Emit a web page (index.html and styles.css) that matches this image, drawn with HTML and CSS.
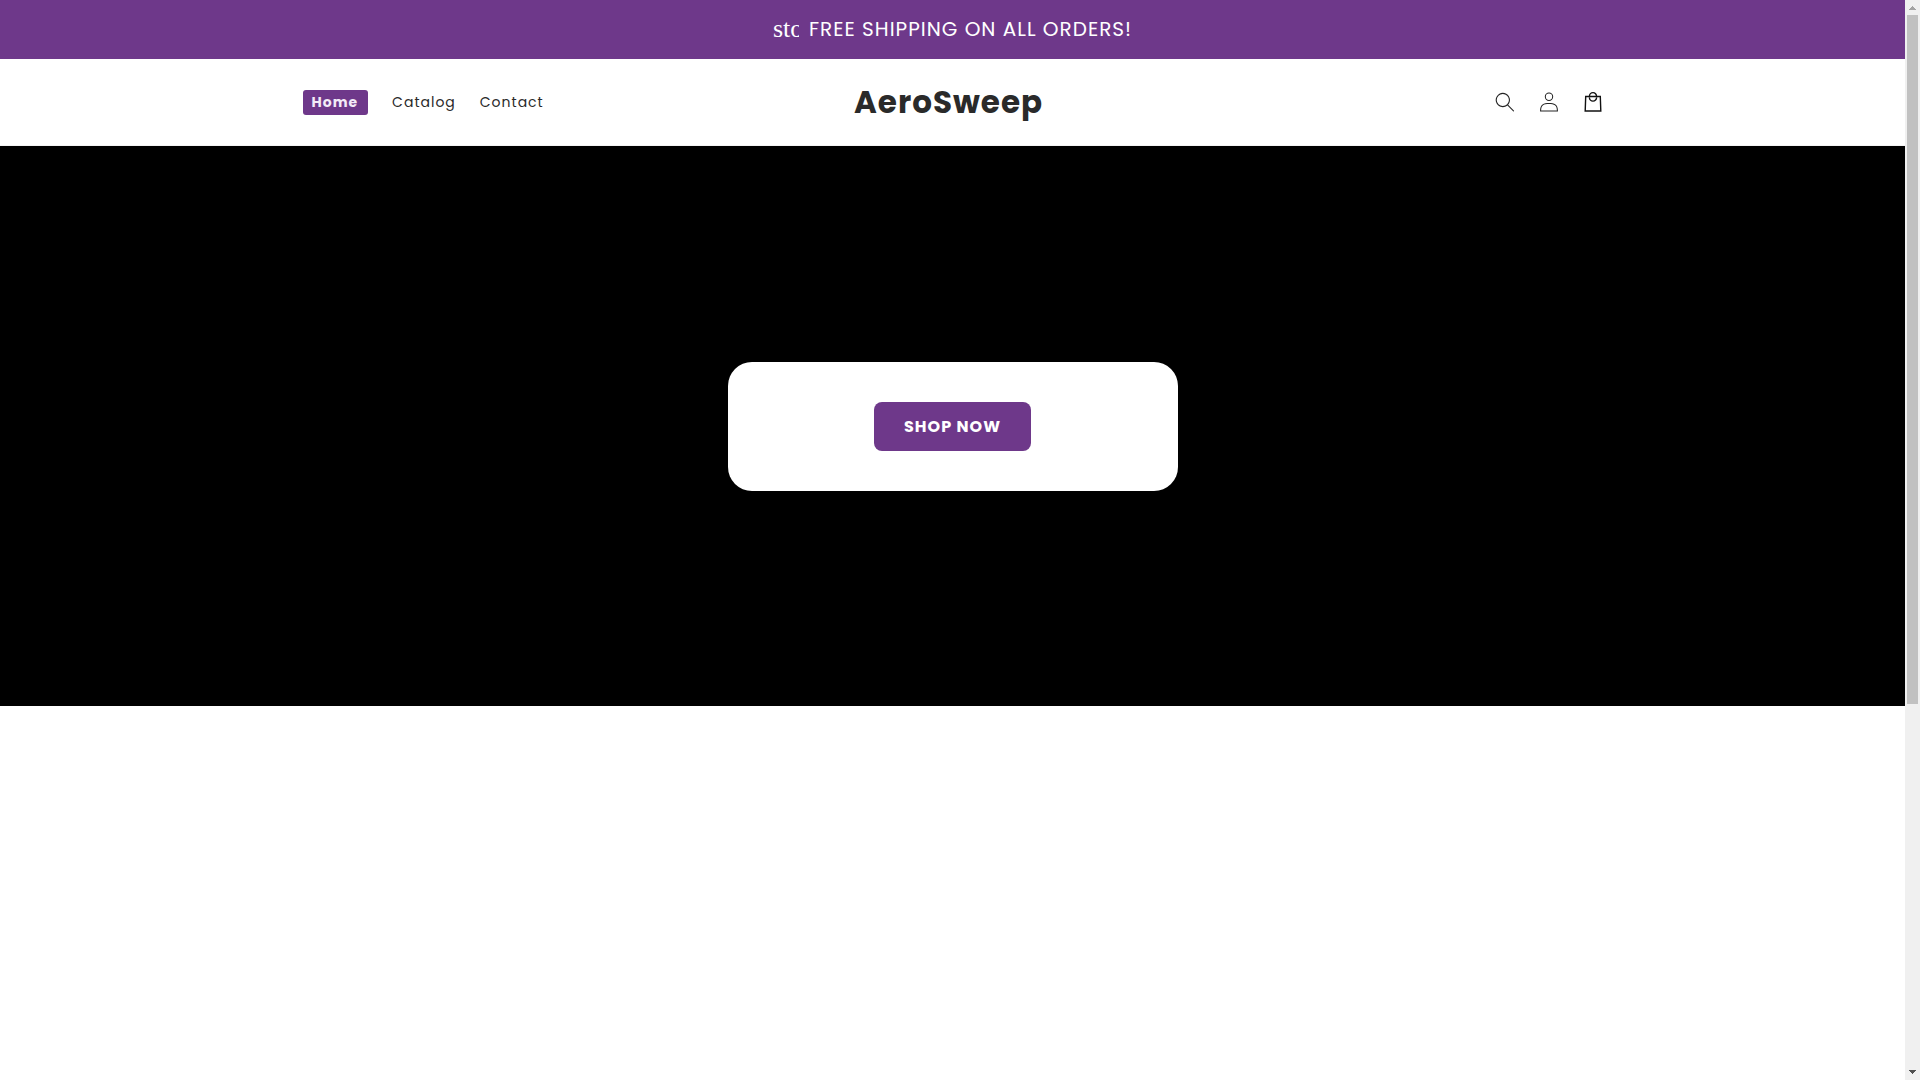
FILE: index.html
```html
<!DOCTYPE html>
<html lang="en">
<head>
<meta charset="utf-8">
<meta name="viewport" content="width=device-width, initial-scale=1">
<title>AeroSweep</title>
<link rel="stylesheet" href="styles.css">
</head>
<body>
<div class="page">
  <div class="announcement">
    <span class="announcement-icon" aria-hidden="true">sto</span>
    <p class="announcement-text">FREE SHIPPING ON ALL ORDERS!</p>
  </div>
  <header class="header">
    <div class="header-inner">
      <nav class="nav" aria-label="Main">
        <a class="nav-link nav-link-active" href="#home" aria-current="page">Home</a>
        <a class="nav-link" href="#catalog">Catalog</a>
        <a class="nav-link" href="#contact">Contact</a>
      </nav>
      <a class="logo" href="#home">AeroSweep</a>
      <div class="actions">
        <button class="icon-button" type="button" aria-label="Search">
          <svg class="icon" viewBox="0 0 18 19" aria-hidden="true"><path fill-rule="evenodd" clip-rule="evenodd" d="M11.03 11.68A5.784 5.784 0 112.85 3.5a5.784 5.784 0 018.18 8.18zm.26 1.12a6.78 6.78 0 11.72-.7l5.4 5.4a.5.5 0 11-.71.7l-5.41-5.4z"/></svg>
        </button>
        <a class="icon-button" href="#account" aria-label="Log in">
          <svg class="icon" viewBox="0 0 18 19" aria-hidden="true"><path fill-rule="evenodd" clip-rule="evenodd" d="M6 4.5a3 3 0 116 0 3 3 0 01-6 0zm3-4a4 4 0 100 8 4 4 0 000-8zm5.58 12.15c1.12.82 1.83 2.24 1.91 4.85H1.51c.08-2.6.79-4.03 1.9-4.85C4.66 11.75 6.5 11.5 9 11.5s4.35.26 5.58 1.15zM9 10.5c-2.5 0-4.65.24-6.17 1.35C1.27 12.98.5 14.93.5 18v.5h17V18c0-3.07-.77-5.02-2.33-6.15-1.52-1.1-3.67-1.35-6.17-1.35z"/></svg>
        </a>
        <a class="icon-button" href="#cart" aria-label="Cart">
          <svg class="bag" viewBox="0 0 20 22" aria-hidden="true"><path d="M2.700 5.500h14.600l.5 14.500H2.200zM6.400 5.500a3.600 3.900 0 0 1 7.200 0M6.400 6.500a3.600 3.600 0 0 0 7.200 0"/></svg>
        </a>
      </div>
    </div>
  </header>
  <main>
    <section class="hero">
      <div class="hero-card">
        <a class="shop-button" href="#shop">SHOP NOW</a>
      </div>
    </section>
  </main>
</div>
<div class="scrollbar" aria-hidden="true">
  <svg class="scroll-arrow" viewBox="0 0 15 15" shape-rendering="crispEdges"><path fill="#a3a3a3" d="M7 6h1v1h1v1h1v1h1v1H4V9h1V8h1V7h1z"/></svg>
  <div class="scroll-track"><div class="scroll-thumb"></div></div>
  <svg class="scroll-arrow" viewBox="0 0 15 15" shape-rendering="crispEdges"><path fill="#505050" d="M4 5h7v1h-1v1H9v1H8v1H7V8H6V7H5V6H4z"/></svg>
</div>
</body>
</html>
```
FILE: styles.css
```css
* {
  box-sizing: border-box;
}

body {
  margin: 0;
  display: flex;
  height: 100vh;
  overflow: hidden;
  background: #fff;
  color: #2a2a2a;
  font-family: Poppins, Inter, sans-serif;
}

a {
  color: inherit;
  text-decoration: none;
}

.page {
  flex: 1;
  min-width: 0;
}

.announcement {
  display: flex;
  align-items: center;
  justify-content: center;
  gap: 10px;
  height: 59px;
  padding-bottom: 2px;
  background: #6e388a;
  color: #fff;
}

.announcement-icon {
  width: 26px;
  overflow: hidden;
  font-family: "Liberation Serif", serif;
  font-size: 26px;
  line-height: 28px;
}

.announcement-text {
  margin: 0;
  font-size: 20px;
  line-height: 30px;
  letter-spacing: 1px;
}

.header {
  border-bottom: 1px solid #f4f4f4;
}

.header-inner {
  display: grid;
  grid-template-columns: 1fr auto 1fr;
  align-items: center;
  max-width: 1400px;
  height: 86px;
  margin: 0 auto;
  padding: 0 50px;
}

.nav {
  display: flex;
  align-items: center;
  gap: 24px;
}

.nav-link {
  font-size: 14px;
  line-height: 25px;
  letter-spacing: 1px;
}

.nav-link-active {
  padding: 0 10px 0 9px;
  border-radius: 3px;
  background: #6e388a;
  color: #f3ebf7;
  font-weight: 700;
}

.logo {
  padding-right: 8px;
  font-size: 31px;
  font-weight: 700;
  line-height: 40px;
  letter-spacing: 1px;
}

.actions {
  display: flex;
  justify-content: flex-end;
  margin-right: -12px;
}

.icon-button {
  display: flex;
  align-items: center;
  justify-content: center;
  width: 44px;
  height: 44px;
  padding: 0;
  border: 0;
  background: none;
  color: #242424;
  cursor: pointer;
}

.icon {
  width: 20px;
  height: 20px;
  fill: currentColor;
}

.bag {
  width: 20px;
  height: 22px;
  fill: none;
  stroke: #111;
  stroke-width: 1.4;
}

.hero {
  display: flex;
  align-items: center;
  justify-content: center;
  min-height: 560px;
  background: #000;
}

.hero-card {
  display: flex;
  justify-content: center;
  width: 450px;
  max-width: 100%;
  padding: 40px;
  border-radius: 24px;
  background: #fff;
}

.shop-button {
  padding: 12px 30px;
  border-radius: 8px;
  background: #6e388a;
  color: #fff;
  font-size: 16px;
  font-weight: 700;
  line-height: 25px;
  letter-spacing: 1px;
}

.scrollbar {
  display: flex;
  flex-direction: column;
  width: 15px;
  background: #f0f0f0;
}

.scroll-arrow {
  width: 15px;
  height: 15px;
}

.scroll-track {
  flex: 1;
  padding: 0 2px;
}

.scroll-thumb {
  height: 65.6%;
  background: #c1c1c1;
}
```
